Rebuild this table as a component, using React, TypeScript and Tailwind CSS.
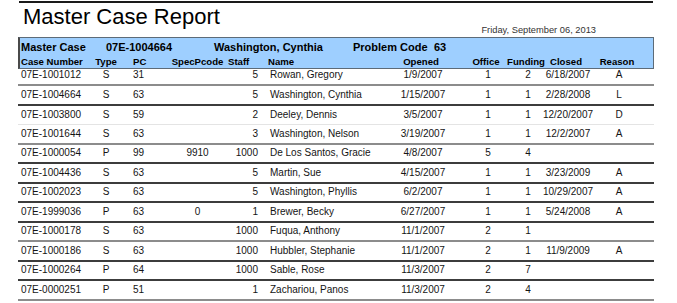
import React from "react";

type Row = [string, string, string, string, string, string, string, string, string, string, string, string];

const rows: Row[] = [
  ["07E-1001012", "S", "31", "", "5", "Rowan, Gregory", "1/9/2007", "1", "2", "6/18/2007", "A", "g"],
  ["07E-1004664", "S", "63", "", "5", "Washington, Cynthia", "1/15/2007", "1", "1", "2/28/2008", "L", "d"],
  ["07E-1003800", "S", "59", "", "2", "Deeley, Dennis", "3/5/2007", "1", "1", "12/20/2007", "D", "l"],
  ["07E-1001644", "S", "63", "", "3", "Washington, Nelson", "3/19/2007", "1", "1", "12/2/2007", "A", "g"],
  ["07E-1000054", "P", "99", "9910", "1000", "De Los Santos, Gracie", "4/8/2007", "5", "4", "", "", "d"],
  ["07E-1004436", "S", "63", "", "5", "Martin, Sue", "4/15/2007", "1", "1", "3/23/2009", "A", "d"],
  ["07E-1002023", "S", "63", "", "5", "Washington, Phyllis", "6/2/2007", "1", "1", "10/29/2007", "A", "d"],
  ["07E-1999036", "P", "63", "0", "1", "Brewer, Becky", "6/27/2007", "1", "1", "5/24/2008", "A", "d"],
  ["07E-1000178", "S", "63", "", "1000", "Fuqua, Anthony", "11/1/2007", "2", "1", "", "", "g"],
  ["07E-1000186", "S", "63", "", "1000", "Hubbler, Stephanie", "11/1/2007", "2", "1", "11/9/2009", "A", "d"],
  ["07E-1000264", "P", "64", "", "1000", "Sable, Rose", "11/3/2007", "2", "7", "", "", "d"],
  ["07E-0000251", "P", "51", "", "1", "Zachariou, Panos", "11/3/2007", "2", "4", "", "", "g"],
];

function lineClass(k: string) {
  if (k === "g") return "border-b-2 border-[#8c8c8c]";
  if (k === "d") return "border-b-2 border-[#3c3c3c]";
  return "border-b border-[#e4e4e4]";
}

function Cells({ r }: { r: Row }) {
  return (
    <>
      <div className="w-[74px] pl-[3px] whitespace-nowrap">{r[0]}</div>
      <div className="w-[28px] flex justify-center">{r[1]}</div>
      <div className="w-[45px] pl-[13px]">{r[2]}</div>
      <div className="w-[65px] flex justify-center">{r[3]}</div>
      <div className="w-[28px] flex justify-end">{r[4]}</div>
      <div className="w-[137px] pl-[12px] whitespace-nowrap">{r[5]}</div>
      <div className="w-[56px] flex justify-center whitespace-nowrap">{r[6]}</div>
      <div className="w-[17px]" />
      <div className="w-[40px] flex justify-center">{r[7]}</div>
      <div className="w-[40px] flex justify-center">{r[8]}</div>
      <div className="w-[40px] flex justify-center whitespace-nowrap">{r[9]}</div>
      <div className="w-[62px] flex justify-center">{r[10]}</div>
    </>
  );
}

export default function App() {
  return (
    <div className="w-[677px] h-[303px] bg-white overflow-hidden text-[#141414] font-['Liberation_Sans',Arial,sans-serif]">
      <div className="ml-[18px] w-[636px]">
        <div className="mt-[1px] h-[2px] bg-[#1a1a1a] ml-[1px] mr-[1px]" />
        <div className="h-[34px] flex justify-between">
          <div className="pt-[3px] pl-[5px] text-[22px] leading-[22px] text-black">Master Case Report</div>
          <div className="mt-[22px] mr-[58px] text-[9.3px] leading-[11px] text-[#333]">Friday, September 06, 2013</div>
        </div>
        <div className="h-[32px] bg-[#9ecfff] border border-[#5d6b78] border-l-2 border-l-[#4a4a4a] text-black font-bold">
          <div className="h-[17px] flex items-center pl-[1px] pt-[1px] text-[11px] leading-[13px] whitespace-nowrap">
            <div className="w-[85px]">Master Case</div>
            <div className="w-[108px]">07E-1004664</div>
            <div className="w-[139px]">Washington, Cynthia</div>
            <div className="w-[81px]">Problem Code</div>
            <div>63</div>
          </div>
          <div className="h-[13px] flex items-center -ml-[2px] text-[9.6px] leading-[12px] whitespace-nowrap">
            <div className="w-[74px] pl-[3px]">Case Number</div>
            <div className="w-[28px] flex justify-center">Type</div>
            <div className="w-[45px] pl-[13px]">PC</div>
            <div className="w-[65px] flex justify-center">SpecPcode</div>
            <div className="w-[28px] -ml-[2px] pr-[2px]">Staff</div>
            <div className="w-[137px] pl-[12px]">Name</div>
            <div className="w-[56px] flex justify-center">Opened</div>
            <div className="w-[17px]" />
            <div className="w-[40px] flex justify-center">Office</div>
            <div className="w-[40px] flex justify-center">Funding</div>
            <div className="w-[40px] flex justify-center">Closed</div>
            <div className="w-[62px] flex justify-center">Reason</div>
          </div>
        </div>
        <div className="text-[10px] leading-[12px]">
          {rows.map((r, i) => (
            <div
              key={i}
              className={`flex items-end pb-[3px] ${i === 0 ? "h-[17px]" : "h-[19.5px]"} ${lineClass(r[11])}`}
            >
              <Cells r={r} />
            </div>
          ))}
        </div>
      </div>
    </div>
  );
}
